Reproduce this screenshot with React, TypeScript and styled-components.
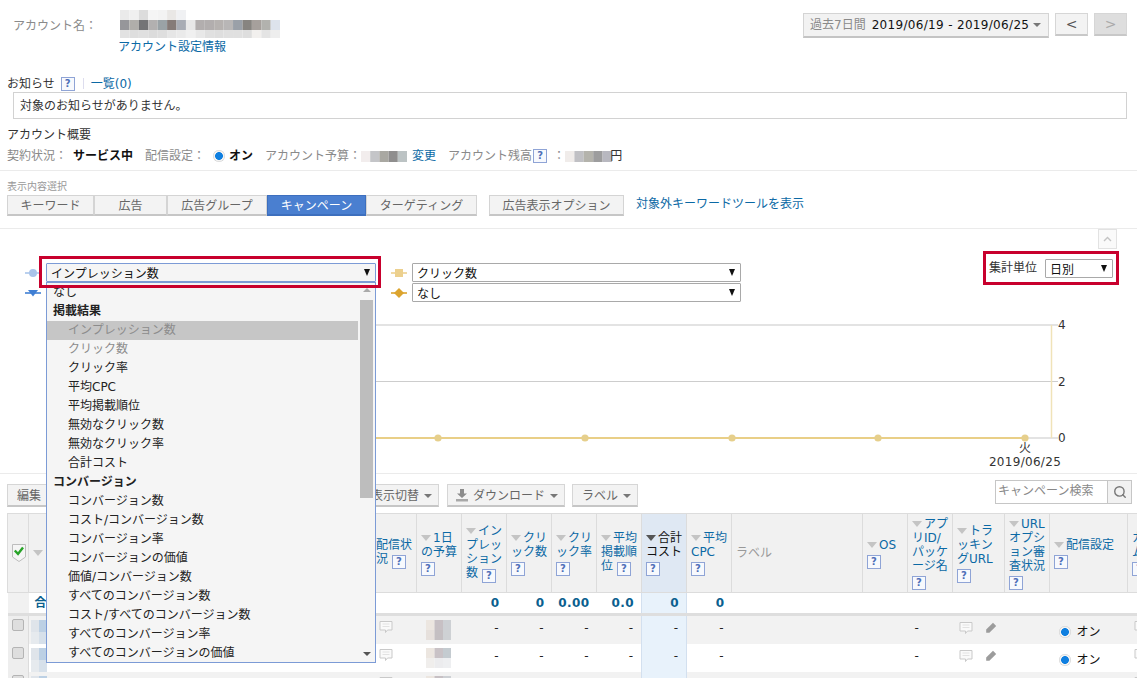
import React from "react";
import styled, { createGlobalStyle, css } from "styled-components";
import { Search } from "lucide-react";

const Global = createGlobalStyle`
  html, body { margin: 0; padding: 0; background: #fff; }
  body { font-family: "DejaVu Sans", "Noto Sans CJK JP", sans-serif; font-size: 12px; line-height: 16px; color: #333; }
`;

const Page = styled.div`
  position: relative;
  width: 1137px;
  height: 678px;
  overflow: hidden;
  background: #fff;
`;

/* ---------- shared ---------- */
const Link = styled.a`
  color: #0b69a5;
  text-decoration: none;
  white-space: nowrap;
`;
const Muted = styled.span`
  color: #8a8a8a;
  white-space: nowrap;
`;
const Help = styled.span`
  display: inline-block;
  width: 12px;
  height: 12px;
  line-height: 12px;
  border: 1px solid #8fa4d6;
  background: #f7f9fd;
  color: #4f6fb8;
  font-size: 10px;
  font-weight: 700;
  text-align: center;
  vertical-align: -2px;
  text-indent: 0;
`;
const Divider = styled.div<{ $top: number }>`
  height: 1px;
  background: #ebebeb;
  margin-top: ${(p) => p.$top}px;
`;
const RadioDot = styled.span`
  display: inline-block;
  flex: none;
  width: 12px;
  height: 12px;
  border-radius: 50%;
  background: radial-gradient(circle at 50% 50%, #0f7fe0 0, #0f7fe0 3.6px, #f2f2f2 4.2px, #f2f2f2 5px, #c9c9c9 6px);
`;

/* ---------- mosaic (pixelated redaction) ---------- */
const Mosaic = ({ rows, cell = 10, heights }: { rows: string[][]; cell?: number; heights: number[] }) => {
  const width = Math.max(...rows.map((r) => r.length)) * cell;
  const height = heights.reduce((a, b) => a + b, 0);
  let y = 0;
  return (
    <svg width={width} height={height} style={{ display: "block", flex: "none" }} aria-hidden>
      {rows.map((r, i) => {
        const top = y;
        y += heights[i];
        return r.map((c, j) => <rect key={`${i}-${j}`} x={j * cell} y={top} width={cell} height={heights[i]} fill={c} />);
      })}
    </svg>
  );
};

/* ---------- header ---------- */
const Header = styled.header`
  display: flex;
  justify-content: space-between;
  height: 76px;
  padding: 10px 10px 0 13px;
  box-sizing: border-box;
`;
const AccountBlock = styled.div`
  display: flex;
  align-items: flex-start;
`;
const AccountLabel = styled(Muted)`
  width: 107px;
  margin-top: 8px;
`;
const AccountInfo = styled.div`
  display: flex;
  flex-direction: column;
  align-items: flex-start;
`;
const AccountLink = styled(Link)`
  margin: 1px 0 0 -2px;
  line-height: 16px;
`;
const DateNav = styled.div`
  display: flex;
  align-items: flex-start;
  margin-top: 3px;
`;
const DateButton = styled.div`
  display: flex;
  align-items: center;
  width: 246px;
  height: 25px;
  box-sizing: border-box;
  padding-left: 6px;
  background: #f2f2f2;
  border: 1px solid #d4d4d4;
  border-bottom: 2px solid #c4c4c4;
  white-space: nowrap;
`;
const DateRange = styled.span`
  margin-left: 6px;
  color: #111;
  letter-spacing: 0.32px;
`;
const Caret = styled.span<{ $color?: string }>`
  display: inline-block;
  flex: none;
  width: 0;
  height: 0;
  margin-left: 4px;
  border-left: 4px solid transparent;
  border-right: 4px solid transparent;
  border-top: 4px solid ${(p) => p.$color || "#777"};
`;
const NavButton = styled.div<{ $disabled?: boolean }>`
  width: 33px;
  height: 23px;
  margin-left: 6px;
  box-sizing: border-box;
  display: flex;
  align-items: center;
  justify-content: center;
  border: 1px solid #d6d6d6;
  border-bottom: 2px solid #c8c8c8;
  background: ${(p) => (p.$disabled ? "#dedede" : "#f3f3f3")};
  color: ${(p) => (p.$disabled ? "#aaa" : "#555")};
  font-size: 14px;
`;

/* ---------- notice & overview ---------- */
const NoticeTitle = styled.div`
  display: flex;
  align-items: center;
  height: 15px;
  padding-left: 7px;
  color: #333;
`;
const NoticeHelp = styled(Help)`
  margin-left: 6px;
`;
const Pipe = styled.span`
  width: 1px;
  height: 11px;
  margin: 0 7px 0 8px;
  background: #dde;
`;
const NoticeBox = styled.div`
  height: 27px;
  margin: 1px 10px 0 13px;
  padding-left: 6px;
  box-sizing: border-box;
  border: 1px solid #d2d2d2;
  line-height: 27px;
  color: #333;
`;
const OverviewTitle = styled.div`
  margin-top: 8px;
  padding-left: 7px;
  color: #333;
`;
const StatusRow = styled.div`
  display: flex;
  align-items: center;
  height: 16px;
  margin-top: 5px;
  padding-left: 7px;
  white-space: nowrap;
`;
const Strong = styled.b<{ $left: number }>`
  margin-left: ${(p) => p.$left}px;
  color: #111;
`;
const StatusLabel = styled(Muted)<{ $left: number }>`
  margin-left: ${(p) => p.$left}px;
`;
const StatusRadio = styled(RadioDot)`
  margin-left: 8px;
`;
const StatusMosaic = styled.span<{ $left: number }>`
  margin-left: ${(p) => p.$left}px;
`;
const StatusLink = styled(Link)`
  margin-left: 5px;
`;
const Yen = styled.span`
  color: #333;
  margin-left: -2px;
`;
const StatusHelp = styled(Help)`
  margin-left: 1px;
  margin-right: 6px;
`;

/* ---------- tabs ---------- */
const SectionCaption = styled.div`
  margin-top: 10px;
  padding-left: 7px;
  height: 14px;
  line-height: 12px;
  font-size: 10px;
  color: #999;
`;
const TabRow = styled.div`
  display: flex;
  align-items: center;
  height: 21px;
  padding-left: 7px;
`;
const Tab = styled.div<{ $w: number; $active?: boolean }>`
  width: ${(p) => p.$w}px;
  height: 21px;
  box-sizing: border-box;
  text-align: center;
  line-height: 20px;
  border: 1px solid #d4d4d4;
  border-bottom: 2px solid #c6c6c6;
  white-space: nowrap;
  ${(p) =>
    p.$active
      ? css`
          background: #4a7fd0;
          border-color: #3d6fbe;
          color: #fff;
        `
      : css`
          background: #f3f3f3;
          color: #666;
        `}
`;
const OptionTab = styled(Tab)`
  margin-left: 12px;
`;
const TabLink = styled(Link)`
  margin-left: 12px;
  margin-top: -4px;
`;

/* ---------- chart ---------- */
const ChartSection = styled.section`
  height: 245px;
  border-bottom: 1px solid #ebebeb;
  box-sizing: border-box;
`;
const SelectorRow = styled.div`
  display: flex;
  align-items: flex-start;
  height: 91px;
`;
const SelectorColumn = styled.div<{ $left: number }>`
  display: flex;
  flex-direction: column;
  gap: 1px;
  margin: 34px 0 0 ${(p) => p.$left}px;
`;
const SelectorLine = styled.div`
  display: flex;
  align-items: center;
  gap: 5px;
`;
const Select = styled.div<{ $w: number; $open?: boolean; $framed?: boolean }>`
  position: relative;
  width: ${(p) => p.$w}px;
  height: 19px;
  box-sizing: border-box;
  padding-left: 4px;
  line-height: 20px;
  background: ${(p) => (p.$open ? "#f5f5f5" : "#fff")};
  border: 1px solid ${(p) => (p.$open ? "#7c9bd6" : "#a9a9a9")};
  border-radius: 1px;
  color: #111;
  white-space: nowrap;
  ${(p) =>
    p.$framed &&
    css`
      z-index: 6;
      &::before {
        content: "";
        position: absolute;
        inset: -8px -6px -7px -8px;
        border: 3px solid #c8002d;
        pointer-events: none;
      }
    `}
`;
const SelectArrow = styled.span`
  position: absolute;
  right: 5px;
  top: 5px;
  width: 0;
  height: 0;
  border-left: 3.5px solid transparent;
  border-right: 3.5px solid transparent;
  border-top: 7px solid #111;
`;
const RightColumn = styled.div`
  margin-left: auto;
  display: flex;
  flex-direction: column;
  align-items: flex-end;
`;
const CollapseButton = styled.div`
  display: flex;
  align-items: center;
  justify-content: center;
  width: 19px;
  height: 20px;
  box-sizing: border-box;
  margin-right: 20px;
  border: 1px solid #e2e2e2;
  background: #fafafa;
`;
const UnitFrame = styled.div`
  display: flex;
  align-items: center;
  gap: 8px;
  width: 136px;
  height: 34px;
  box-sizing: border-box;
  margin: 2px 18px 0 0;
  padding-left: 3px;
  border: 3px solid #c8002d;
  white-space: nowrap;
`;
const ChartSvg = styled.svg`
  display: block;
`;

/* ---------- open dropdown ---------- */
const Dropdown = styled.div`
  position: absolute;
  left: 46px;
  top: 282px;
  width: 330px;
  height: 381px;
  box-sizing: border-box;
  display: flex;
  background: #f5f5f5;
  border: 1px solid #7c9bd6;
  overflow: hidden;
  z-index: 5;
`;
const OptionList = styled.div`
  width: 311px;
  flex: none;
`;
const OptionItem = styled.div<{ $group?: boolean; $selected?: boolean; $dim?: boolean; $none?: boolean }>`
  height: 19px;
  line-height: 19px;
  white-space: nowrap;
  padding-left: ${(p) => (p.$group || p.$none ? 6 : 21)}px;
  font-weight: ${(p) => (p.$group ? 700 : 400)};
  color: ${(p) => (p.$selected || p.$dim ? "#8c8c8c" : "#222")};
  background: ${(p) => (p.$selected ? "#c6c6c6" : "transparent")};
`;
const ScrollBar = styled.div`
  width: 13px;
  margin-left: 2px;
  flex: none;
  display: flex;
  flex-direction: column;
  align-items: center;
`;
const ScrollThumb = styled.div`
  width: 13px;
  height: 198px;
  background: #bdbdbd;
  margin: 8px 0 auto;
`;
const ScrollArrowUp = styled.span`
  margin-top: 5px;
  width: 0;
  height: 0;
  border-left: 4px solid transparent;
  border-right: 4px solid transparent;
  border-bottom: 4px solid #aaa;
`;
const ScrollArrowDown = styled.span`
  margin-bottom: 6px;
  width: 0;
  height: 0;
  border-left: 4px solid transparent;
  border-right: 4px solid transparent;
  border-top: 4px solid #555;
`;

/* ---------- toolbar ---------- */
const Toolbar = styled.div`
  display: flex;
  align-items: flex-start;
  height: 27px;
  margin: 6px 5px 6px 7px;
`;
const ToolButton = styled.div<{ $w: number; $left?: number }>`
  display: flex;
  align-items: center;
  justify-content: flex-end;
  gap: 4px;
  width: ${(p) => p.$w}px;
  height: 23px;
  padding: 1px 6px 0 0;
  margin-top: 4px;
  margin-left: ${(p) => p.$left || 0}px;
  box-sizing: border-box;
  background: #f3f3f3;
  border: 1px solid #d6d6d6;
  border-bottom: 2px solid #c6c6c6;
  color: #666;
  white-space: nowrap;
  ${Caret} { margin-left: 1px; }
`;
const SearchGroup = styled.div`
  display: flex;
  margin-left: auto;
  height: 24px;
  border: 1px solid #c6c6c6;
  box-sizing: border-box;
  width: 137px;
`;
const SearchInput = styled.div`
  flex: 1;
  line-height: 21px;
  padding-left: 2px;
  color: #888;
  white-space: nowrap;
  border-right: 1px solid #c6c6c6;
`;
const SearchButton = styled.div`
  width: 23px;
  background: #f2f2f2;
  display: flex;
  align-items: center;
  justify-content: center;
  color: #777;
`;

/* ---------- table ---------- */
const Table = styled.table`
  table-layout: fixed;
  width: 1173px;
  margin-left: 7px;
  border-collapse: collapse;
`;
const HeadCell = styled.th<{ $sorted?: boolean; $plain?: boolean }>`
  height: 79px;
  padding: 0 3px 0 4px;
  box-sizing: border-box;
  border: 1px solid #dcdcdc;
  background: ${(p) => (p.$sorted ? "#dfe8f3" : "#f1f1f1")};
  font-weight: 400;
  font-size: 12px;
  line-height: 14px;
  text-align: left;
  color: ${(p) => (p.$sorted ? "#111" : p.$plain ? "#999" : "#0b69a5")};
  line-break: anywhere;
  word-break: break-all;
  overflow: hidden;
`;
const SortMark = styled.span<{ $on?: boolean }>`
  display: inline-block;
  width: 0;
  height: 0;
  margin-right: 2px;
  vertical-align: 1px;
  border-left: 5px solid transparent;
  border-right: 5px solid transparent;
  border-top: 6px solid ${(p) => (p.$on ? "#555" : "#c4c4c4")};
`;
const TotalCell = styled.td<{ $sorted?: boolean; $tint?: boolean }>`
  height: 22px;
  padding: 0 7px 0 6px;
  box-sizing: border-box;
  text-align: right;
  font-weight: 700;
  color: #0b5f8f;
  letter-spacing: 0.4px;
  border-bottom: 3px solid #dedede;
  background: ${(p) => (p.$sorted ? "#e8f2fb" : p.$tint ? "#f1f1f1" : "#fff")};
  ${(p) => p.$sorted && "border-left: 1px solid #d3e0ef; border-right: 1px solid #d3e0ef;"}
`;
const TotalName = styled(TotalCell)`
  text-align: left;
`;
const Row = styled.tr<{ $alt?: boolean }>`
  background: ${(p) => (p.$alt ? "#f2f2f2" : "#fff")};
`;
const Cell = styled.td<{ $sorted?: boolean; $align?: string; $tint?: boolean; $left?: number }>`
  height: 28px;
  padding: 4px 8px 0 ${(p) => (p.$left === undefined ? 7 : p.$left)}px;
  box-sizing: border-box;
  vertical-align: top;
  text-align: ${(p) => p.$align || "right"};
  color: #222;
  white-space: nowrap;
  ${(p) => p.$sorted && "background: #e8f2fb; border-left: 1px solid #d3e0ef; border-right: 1px solid #d3e0ef;"}
  ${(p) => p.$tint && "background: #eeeeee; border-right: 1px solid #dcdcdc;"}
`;
const CheckBox = styled.span`
  display: block;
  width: 12px;
  height: 12px;
  box-sizing: border-box;
  margin: -1px 0 0 -3px;
  border: 1px solid #b4b4b4;
  border-radius: 2px;
  background: #dedede;
`;
const IconRow = styled.div`
  display: flex;
  align-items: center;
  gap: 12px;
  height: 16px;
`;
const RadioCell = styled.div`
  display: flex;
  align-items: center;
  gap: 6px;
  height: 16px;
  margin: 4px 0 0 2px;
  color: #111;
`;

/* ---------- drawings ---------- */
const CommentIcon = () => (
  <svg width="14" height="14" viewBox="0 0 14 14" style={{ display: "block", flex: "none" }}>
    <path d="M1 1.5h12v8.5H8.5L6.5 12.5V10H1z" fill="#fafafa" stroke="#c9c9c9" />
    <path d="M3.5 4h7M3.5 6.5h7" stroke="#e2e2e2" />
  </svg>
);
const PencilIcon = () => (
  <svg width="12" height="12" viewBox="0 0 12 12" style={{ display: "block", flex: "none" }}>
    <path d="M8 .8l3.2 3.2-6.8 6.8H1.2V7.6z" fill="#9c9c9c" />
  </svg>
);
const DownloadIcon = () => (
  <svg width="14" height="13" viewBox="0 0 14 13" style={{ display: "block" }}>
    <path d="M5 0h4v4.5h3L7 9 2 4.5h3z" fill="#8c8c8c" />
    <path d="M1 10h12v2.5H1z" fill="#a8a8a8" />
  </svg>
);
const ShieldCheck = () => (
  <svg width="14" height="18" viewBox="0 0 14 18" style={{ display: "block" }}>
    <path d="M.5.5h13V13L7 17.5.5 13z" fill="#f5f5f5" stroke="#bdbdbd" />
    <path d="M2.8 6.5l3.2 3.4 5-6.4" fill="none" stroke="#27a327" strokeWidth="2.4" />
  </svg>
);
const Legend = ({ kind }: { kind: "circle" | "tri" | "square" | "diamond" }) => {
  const c = { circle: "#a9c4ea", tri: "#3f7fd4", square: "#ecd08e", diamond: "#dca42e" }[kind];
  return (
    <svg width="16" height="12" viewBox="0 0 16 12" style={{ display: "block", flex: "none" }}>
      <path d="M0 6h16" stroke={c} strokeWidth="1.6" />
      {kind === "circle" && <circle cx="8" cy="6" r="4" fill={c} />}
      {kind === "tri" && <path d="M3 3h10L8 9.5z" fill={c} />}
      {kind === "square" && <rect x="4" y="2" width="8" height="8" fill={c} />}
      {kind === "diamond" && <path d="M8 1l5 5-5 5-5-5z" fill={c} />}
    </svg>
  );
};

/* ---------- data ---------- */
const nameRows = [
  ["#eaeaea", "#f0f0f0", "#dcdcdc", "#f5f5f5", "#f3f3f3", "#e9e7e5", "#f0f1f3"],
  ["#96969a", "#b0aeaa", "#747476", "#b2b0b0", "#9aa2a6", "#857b78", "#a8acb4", "#e8e8e8", "#b2aeae", "#b2aeae", "#b6b2b0", "#b8b6b6", "#9aa0a8", "#878480", "#a6a09c", "#b2b2ae", "#dde3ec"],
  ["#e2e2e2", "#dedede", "#e0e0e0", "#dcdcdc", "#dedede", "#e6e6e6", "#eaeaea", "#f0f0f0", "#e8e8e8", "#e0e0e0", "#dedede", "#e0e0e0", "#e0e0e0", "#dedede", "#f2f0ee", "#e4e4e4", "#eeeeee"],
];

const optionsA = ["インプレッション数", "クリック数", "クリック率", "平均CPC", "平均掲載順位", "無効なクリック数", "無効なクリック率", "合計コスト"];
const optionsB = [
  "コンバージョン数", "コスト/コンバージョン数", "コンバージョン率", "コンバージョンの価値", "価値/コンバージョン数",
  "すべてのコンバージョン数", "コスト/すべてのコンバージョン数", "すべてのコンバージョン率", "すべてのコンバージョンの価値",
];

type Col = { w: number; label?: string; sort?: boolean; help?: boolean; plain?: boolean; on?: boolean; total?: string; dash?: boolean };
const cols: Col[] = [
  { w: 21 },
  { w: 343, label: "キャンペーン名", sort: true },
  { w: 45, label: "配信状況", help: true },
  { w: 45, label: "1日の予算", sort: true, help: true },
  { w: 45, label: "インプレッション数", sort: true, help: true, total: "0", dash: true },
  { w: 45, label: "クリック数", sort: true, help: true, total: "0", dash: true },
  { w: 45, label: "クリック率", sort: true, help: true, total: "0.00", dash: true },
  { w: 45, label: "平均掲載順位", sort: true, help: true, total: "0.0", dash: true },
  { w: 45, label: "合計コスト", sort: true, on: true, help: true, total: "0", dash: true },
  { w: 45, label: "平均CPC", sort: true, help: true, total: "0", dash: true },
  { w: 131, label: "ラベル", plain: true },
  { w: 45, label: "OS", sort: true, help: true },
  { w: 45, label: "アプリID/パッケージ名", sort: true, help: true },
  { w: 52, label: "トラッキングURL", sort: true, help: true },
  { w: 45, label: "URLオプション審査状況", sort: true, help: true },
  { w: 78, label: "配信設定", sort: true, help: true },
  { w: 53, label: "カスタムメモ", help: true },
];

const budget = [
  ["#ece6e0", "#c7c0c4", "#cdd0d4"],
  ["#e6e0dc", "#c4bfc2", "#ced1d4"],
];
const budget2 = [
  ["#ece6e0", "#c9c2c6", "#c4cbd0"],
  ["#f0eeec", "#ececee", "#eeeff1"],
];
const rowName = [
  ["#dfe4ea", "#bcd0e4"],
  ["#e6eaee", "#d6e0ea"],
];

const TableRow = ({ alt, pic }: { alt: boolean; pic: string[][] }) => (
  <Row $alt={alt}>
    {cols.map((c, i) => {
      const sorted = !!c.on;
      if (i === 0) return <Cell key={i} $tint $align="left"><CheckBox /></Cell>;
      if (i === 1) return <Cell key={i} $align="left" $left={2}><Mosaic rows={rowName} cell={8} heights={[12, 12]} /></Cell>;
      if (i === 2) return <Cell key={i} $align="left"><CommentIcon /></Cell>;
      if (i === 3) return <Cell key={i} $align="left" $left={9}><Mosaic rows={pic} cell={8.5} heights={[10, 10]} /></Cell>;
      if (i === 12) return <Cell key={i} $align="left">-</Cell>;
      if (i === 13) return <Cell key={i} $align="left" $left={6}><IconRow><CommentIcon /><PencilIcon /></IconRow></Cell>;
      if (i === 15) return <Cell key={i} $align="left"><RadioCell><RadioDot />オン</RadioCell></Cell>;
      if (i === 16) return <Cell key={i} $align="left" $left={6}><CommentIcon /></Cell>;
      return <Cell key={i} $sorted={sorted}>{c.dash ? "-" : ""}</Cell>;
    })}
  </Row>
);

export default function App() {
  return (
    <Page>
      <Global />
      <Header>
        <AccountBlock>
          <AccountLabel>アカウント名：</AccountLabel>
          <AccountInfo>
            <Mosaic rows={nameRows} cell={9.42} heights={[10, 10, 8]} />
            <AccountLink href="#">アカウント設定情報</AccountLink>
          </AccountInfo>
        </AccountBlock>
        <DateNav>
          <DateButton>
            <Muted>過去7日間</Muted>
            <DateRange>2019/06/19 - 2019/06/25</DateRange>
            <Caret />
          </DateButton>
          <NavButton>&lt;</NavButton>
          <NavButton $disabled>&gt;</NavButton>
        </DateNav>
      </Header>

      <NoticeTitle>
        お知らせ<NoticeHelp>?</NoticeHelp><Pipe /><Link href="#">一覧(0)</Link>
      </NoticeTitle>
      <NoticeBox>対象のお知らせがありません。</NoticeBox>

      <OverviewTitle>アカウント概要</OverviewTitle>
      <StatusRow>
        <Muted>契約状況：</Muted>
        <Strong $left={6}>サービス中</Strong>
        <StatusLabel $left={12}>配信設定：</StatusLabel>
        <StatusRadio />
        <Strong $left={4}>オン</Strong>
        <StatusLabel $left={12}>アカウント予算：</StatusLabel>
        <StatusMosaic $left={0}>
          <Mosaic rows={[["#f2eded", "#c4c5c8", "#a9a8a2", "#8f8e8e", "#bcc3c4"]]} cell={9.2} heights={[11]} />
        </StatusMosaic>
        <StatusLink href="#">変更</StatusLink>
        <StatusLabel $left={12}>アカウント残高</StatusLabel>
        <StatusHelp>?</StatusHelp>
        <Muted>：</Muted>
        <StatusMosaic $left={0}>
          <Mosaic rows={[["#f0ecea", "#c0c0c4", "#b4b3ac", "#9d9d9e", "#b8b8c0"]]} cell={9.4} heights={[11]} />
        </StatusMosaic>
        <Yen>円</Yen>
      </StatusRow>
      <Divider $top={6} />

      <SectionCaption>表示内容選択</SectionCaption>
      <TabRow>
        <Tab $w={87}>キーワード</Tab>
        <Tab $w={73}>広告</Tab>
        <Tab $w={100}>広告グループ</Tab>
        <Tab $w={99} $active>キャンペーン</Tab>
        <Tab $w={111}>ターゲティング</Tab>
        <OptionTab $w={135}>広告表示オプション</OptionTab>
        <TabLink href="#">対象外キーワードツールを表示</TabLink>
      </TabRow>
      <Divider $top={12} />

      <ChartSection>
        <SelectorRow>
          <SelectorColumn $left={25}>
            <SelectorLine>
              <Legend kind="circle" />
              <Select $w={330} $open $framed>インプレッション数<SelectArrow /></Select>
            </SelectorLine>
            <SelectorLine>
              <Legend kind="tri" />
              <Select $w={330}>なし<SelectArrow /></Select>
            </SelectorLine>
          </SelectorColumn>
          <SelectorColumn $left={15}>
            <SelectorLine>
              <Legend kind="square" />
              <Select $w={329}>クリック数<SelectArrow /></Select>
            </SelectorLine>
            <SelectorLine>
              <Legend kind="diamond" />
              <Select $w={329}>なし<SelectArrow /></Select>
            </SelectorLine>
          </SelectorColumn>
          <RightColumn>
            <CollapseButton>
              <svg width="9" height="6" viewBox="0 0 9 6"><path d="M1 5l3.5-3.5L8 5" fill="none" stroke="#c4c4c4" strokeWidth="1.4" /></svg>
            </CollapseButton>
            <UnitFrame>
              集計単位
              <Select $w={68}>日別<SelectArrow /></Select>
            </UnitFrame>
          </RightColumn>
        </SelectorRow>
        <ChartSvg width="1137" height="153" viewBox="0 320 1137 153">
          <line x1="100" x2="1058" y1="325" y2="325" stroke="#e3e3e3" strokeWidth="2" />
          <line x1="100" x2="1058" y1="381.5" y2="381.5" stroke="#cdcdcd" />
          <line x1="1025" x2="1058" y1="438" y2="438" stroke="#e3e3e3" strokeWidth="2" />
          <line x1="1051.5" x2="1051.5" y1="325" y2="438" stroke="#f0e3b8" strokeWidth="1.5" />
          <line x1="100" x2="1025" y1="438" y2="438" stroke="#e9cf87" strokeWidth="2" />
          {[438, 585, 732, 878, 1025].map((x) => (
            <circle key={x} cx={x} cy="438" r="3.6" fill="#e6cf8c" />
          ))}
          <g fontSize="12" fill="#333">
            <text x="1058" y="329">4</text>
            <text x="1058" y="386">2</text>
            <text x="1058" y="442">0</text>
            <text x="1025" y="452" textAnchor="middle">火</text>
            <text x="1025" y="466" textAnchor="middle" letterSpacing="0.3">2019/06/25</text>
          </g>
        </ChartSvg>
      </ChartSection>

      <Toolbar>
        <ToolButton $w={41}>編集</ToolButton>
        <ToolButton $w={110} $left={281}>表示切替<Caret /></ToolButton>
        <ToolButton $w={118} $left={8}><DownloadIcon />ダウンロード<Caret /></ToolButton>
        <ToolButton $w={66} $left={7}>ラベル<Caret /></ToolButton>
        <SearchGroup>
          <SearchInput>キャンペーン検索</SearchInput>
          <SearchButton><Search size={14} strokeWidth={2.4} /></SearchButton>
        </SearchGroup>
      </Toolbar>

      <Table>
        <colgroup>
          {cols.map((c, i) => <col key={i} style={{ width: c.w }} />)}
        </colgroup>
        <thead>
          <tr>
            {cols.map((c, i) => (
              <HeadCell key={i} $sorted={c.on} $plain={c.plain}>
                {i === 0 ? <ShieldCheck /> : (
                  <>
                    {c.sort && <SortMark $on={c.on} />}
                    {c.label}
                    {c.help && <> <Help>?</Help></>}
                  </>
                )}
              </HeadCell>
            ))}
          </tr>
        </thead>
        <tbody>
          <tr>
            {cols.map((c, i) =>
              i === 1 ? (
                <TotalName key={i}>合計</TotalName>
              ) : (
                <TotalCell key={i} $sorted={c.on} $tint={i === 0}>{c.total}</TotalCell>
              )
            )}
          </tr>
          <TableRow alt pic={budget} />
          <TableRow alt={false} pic={budget2} />
          <TableRow alt pic={budget} />
        </tbody>
      </Table>

      <Dropdown>
        <OptionList>
          <OptionItem $none>なし</OptionItem>
          <OptionItem $group>掲載結果</OptionItem>
          {optionsA.map((o, i) => (
            <OptionItem key={o} $selected={i === 0} $dim={i === 1}>{o}</OptionItem>
          ))}
          <OptionItem $group>コンバージョン</OptionItem>
          {optionsB.map((o) => <OptionItem key={o}>{o}</OptionItem>)}
        </OptionList>
        <ScrollBar>
          <ScrollArrowUp />
          <ScrollThumb />
          <ScrollArrowDown />
        </ScrollBar>
      </Dropdown>
    </Page>
  );
}
